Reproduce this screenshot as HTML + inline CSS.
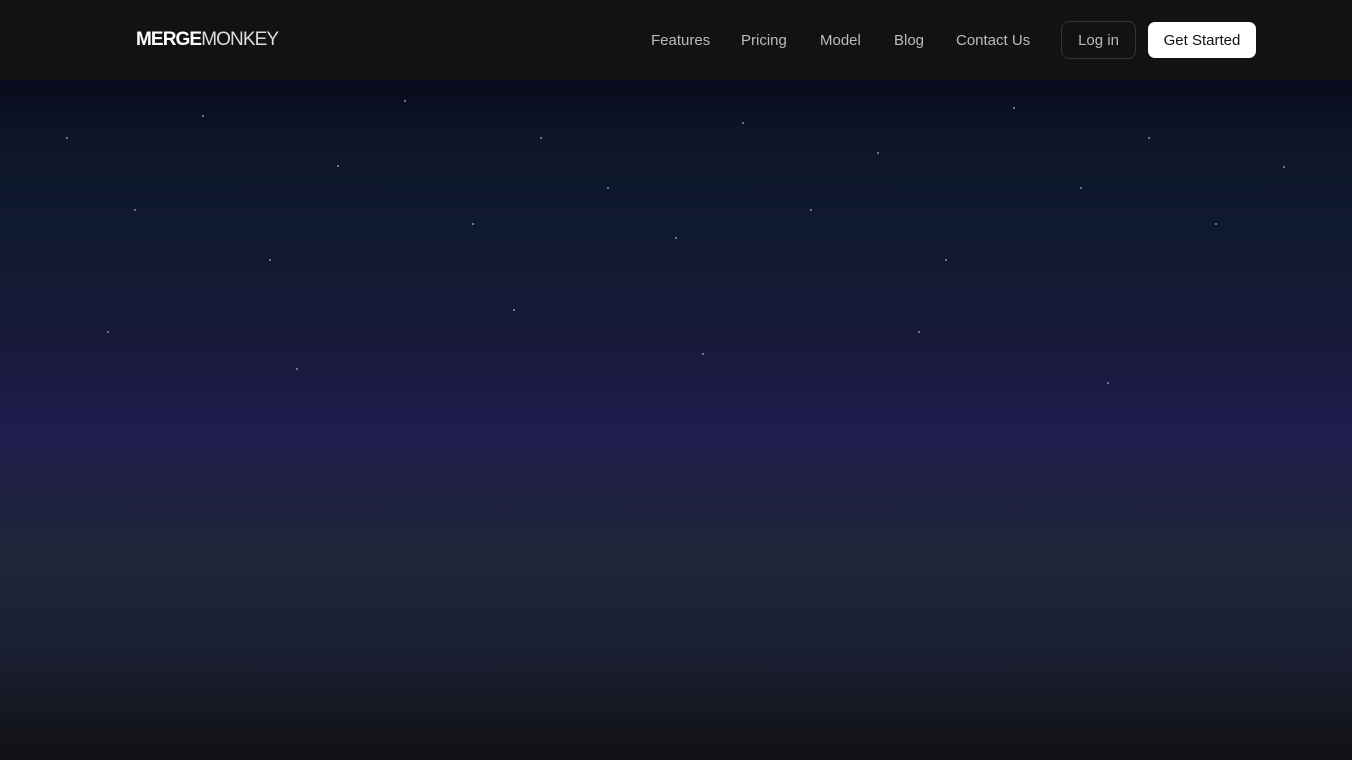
<!DOCTYPE html>
<html><head><meta charset="utf-8"><style>
*{margin:0;padding:0;box-sizing:border-box}
body{width:1352px;height:760px;overflow:hidden;background:#111;font-family:"Liberation Sans",sans-serif}
.nav{position:absolute;top:0;left:0;width:1352px;height:80px;background:#121212}
.logo{position:absolute;left:136px;top:29px;font-size:19px;color:#fff;letter-spacing:-0.9px}
.logo b{font-weight:700}.logo span{font-weight:300;color:#ddd}
.links{position:absolute;top:32px;font-size:15px;color:#bbb}
.btn1{position:absolute;left:1061px;top:21px;width:75px;height:38px;border:1px solid #333;border-radius:8px;color:#bbb;font-size:15px;text-align:center;line-height:37px}
.btn2{position:absolute;left:1148px;top:22px;width:108px;height:36px;background:#fff;border-radius:7px;color:#111;font-size:15px;text-align:center;line-height:37px}
.hero{position:absolute;top:80px;left:0;width:1352px;height:680px;background:linear-gradient(180deg,#080b1c 0px,#0d1628 60px,#101a2f 150px,#18193a 260px,#201c4e 350px,#1f2140 420px,#1e2638 480px,#1b1f33 570px,#121317 665px,#111215 680px)}
.s{position:absolute;width:2px;height:2px;border-radius:50%;background:#8a93b0}
</style></head><body>
<div class="nav">
<div class="logo"><b>MERGE</b><span>MONKEY</span></div>
<div class="links" style="left:651px">Features</div>
<div class="links" style="left:741px">Pricing</div>
<div class="links" style="left:820px">Model</div>
<div class="links" style="left:894px">Blog</div>
<div class="links" style="left:956px">Contact Us</div>
<div class="btn1">Log in</div>
<div class="btn2">Get Started</div>
</div>
<div class="hero">
<div class="s" style="left:404px;top:20px"></div>
<div class="s" style="left:202px;top:35px"></div>
<div class="s" style="left:66px;top:57px"></div>
<div class="s" style="left:540px;top:57px"></div>
<div class="s" style="left:742px;top:42px"></div>
<div class="s" style="left:1013px;top:27px"></div>
<div class="s" style="left:1148px;top:57px"></div>
<div class="s" style="left:337px;top:85px"></div>
<div class="s" style="left:877px;top:72px"></div>
<div class="s" style="left:1283px;top:86px"></div>
<div class="s" style="left:607px;top:107px"></div>
<div class="s" style="left:1080px;top:107px"></div>
<div class="s" style="left:134px;top:129px"></div>
<div class="s" style="left:810px;top:129px"></div>
<div class="s" style="left:472px;top:143px"></div>
<div class="s" style="left:1215px;top:143px"></div>
<div class="s" style="left:675px;top:157px"></div>
<div class="s" style="left:269px;top:179px"></div>
<div class="s" style="left:945px;top:179px"></div>
<div class="s" style="left:513px;top:229px"></div>
<div class="s" style="left:107px;top:251px"></div>
<div class="s" style="left:918px;top:251px"></div>
<div class="s" style="left:702px;top:273px"></div>
<div class="s" style="left:296px;top:288px"></div>
<div class="s" style="left:1107px;top:302px"></div>
</div>
</body></html>
